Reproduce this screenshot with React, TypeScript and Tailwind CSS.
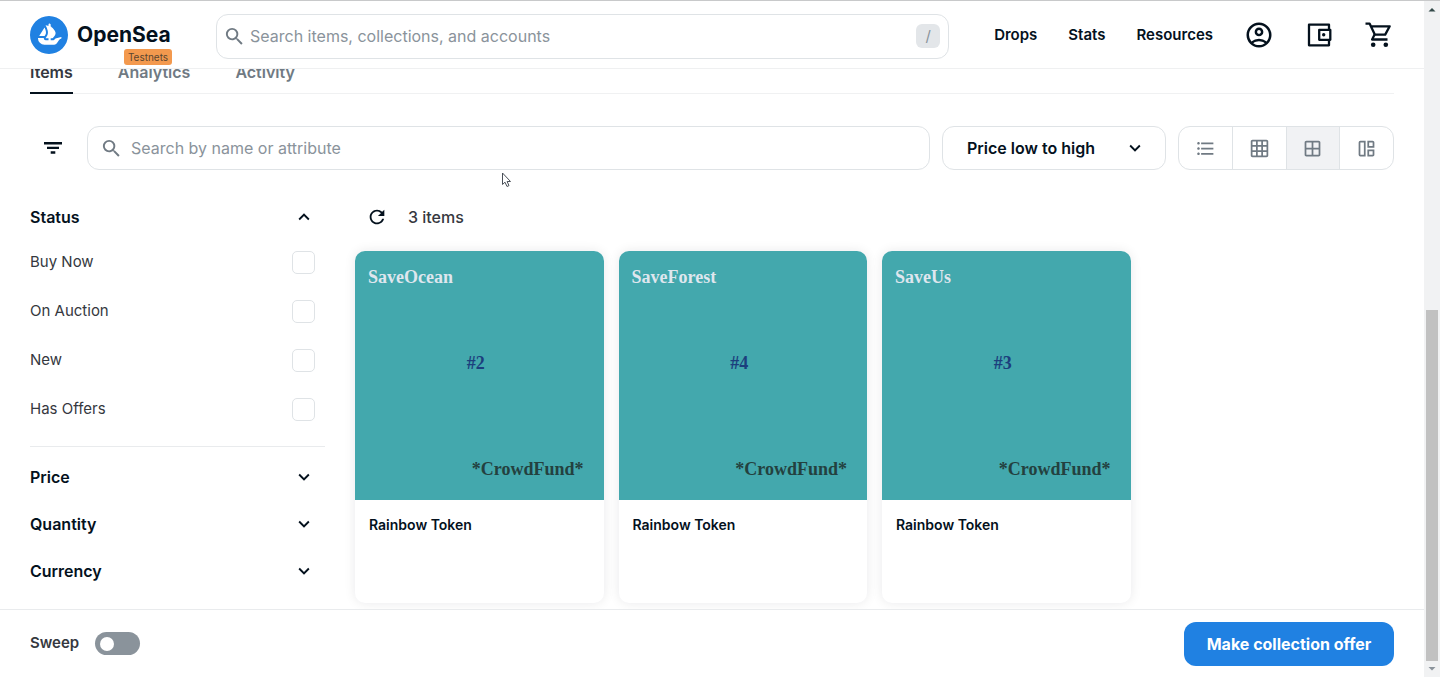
import React from "react";
import {
  MdFormatListBulleted,
  MdGridOn,
  MdKeyboardArrowDown,
  MdKeyboardArrowUp,
  MdOutlineAccountCircle,
  MdOutlineAutoAwesomeMosaic,
  MdOutlineWindow,
  MdRefresh,
  MdSearch,
} from "react-icons/md";
import { SiOpensea } from "react-icons/si";

const statuses = ["Buy Now", "On Auction", "New", "Has Offers"];
const filters = ["Price", "Quantity", "Currency"];
const tokens = [
  { title: "SaveOcean", id: "#2" },
  { title: "SaveForest", id: "#4" },
  { title: "SaveUs", id: "#3" },
];
const views = [
  { label: "List", Icon: MdFormatListBulleted, active: false },
  { label: "Small grid", Icon: MdGridOn, active: false },
  { label: "Large grid", Icon: MdOutlineWindow, active: true },
  { label: "Mosaic", Icon: MdOutlineAutoAwesomeMosaic, active: false },
];

function WalletIcon() {
  return (
    <svg viewBox="0 0 30 30" className="size-[30px]" fill="none" stroke="currentColor" strokeWidth="2.3" strokeLinejoin="round" aria-hidden="true">
      <path d="M25 9.500V4.700H5v20.600h20v-4.800" />
      <path d="M15.200 9.900h11.100v9.900H15.200z" />
      <circle cx="19.700" cy="14.800" r="1.700" fill="currentColor" stroke="none" />
    </svg>
  );
}

function CartIcon() {
  return (
    <svg viewBox="0 0 30 30" className="size-[30px]" fill="none" stroke="currentColor" strokeWidth="2.3" aria-hidden="true">
      <path d="M1.500 3.700h4.200l5.100 10.900h10.400l4.500-8.300H7" strokeLinejoin="round" />
      <path d="M10.600 14.600l-2.500 4.900h15.400" strokeLinejoin="round" />
      <circle cx="9.200" cy="24.700" r="2.300" fill="currentColor" stroke="none" />
      <circle cx="21.800" cy="24.700" r="2.300" fill="currentColor" stroke="none" />
    </svg>
  );
}

function FilterIcon() {
  return (
    <svg viewBox="0 0 24 24" className="size-6" fill="currentColor" aria-hidden="true">
      <path d="M3 6h18v2.500H3zM6 10.800h12v2.300H6zM9.700 15.300h4.600v2.400H9.700z" />
    </svg>
  );
}

function Header() {
  return (
    <header className="relative z-10 flex h-[69px] shrink-0 items-center border-t border-b border-t-[#c8c9ca] border-b-[#eff0f1] bg-white px-[30px]">
      <a href="#home" className="relative flex w-[142px] shrink-0 items-center gap-[9px]">
        <SiOpensea className="size-[38px] shrink-0 text-[#2081e2]" aria-hidden="true" />
        <span className="text-[21px] leading-7 font-bold">OpenSea</span>
        <span className="absolute right-0 -bottom-[11px] flex h-4 w-12 items-center justify-center rounded-[3px] bg-[#f3994e] text-[10px] leading-4 text-[#5a4530]">
          Testnets
        </span>
      </a>
      <label className="mt-[3px] ml-[44px] flex h-[45px] flex-1 items-center gap-1 rounded-xl border border-[#dfe3e6] bg-white pr-2 pl-[6px]">
        <MdSearch className="size-[23px] shrink-0 text-[#707a83]" aria-hidden="true" />
        <input
          type="text"
          aria-label="Search items, collections, and accounts"
          placeholder="Search items, collections, and accounts"
          className="min-w-0 flex-1 text-base outline-none placeholder:text-[#8a939b]"
        />
        <kbd className="flex h-6 w-6 items-center justify-center rounded-md bg-[#e3e6e9] font-['Inter',sans-serif] text-[15px] text-[#8a939b]">
          /
        </kbd>
      </label>
      <nav className="ml-[45px] flex items-center gap-[31px] text-[15px] leading-6 font-semibold">
        <a href="#drops">Drops</a>
        <a href="#stats">Stats</a>
        <a href="#resources">Resources</a>
      </nav>
      <div className="ml-[31px] flex items-center gap-[30px]">
        <button type="button" aria-label="Account">
          <MdOutlineAccountCircle className="size-[30px]" />
        </button>
        <button type="button" aria-label="Wallet">
          <WalletIcon />
        </button>
        <button type="button" aria-label="Cart">
          <CartIcon />
        </button>
      </div>
    </header>
  );
}

function Tabs() {
  return (
    <nav className="-mt-[9px] flex gap-[45px] border-b border-[#f0f1f2] text-base leading-6 font-semibold text-[#707a83]">
      <a href="#items" className="-mb-px border-b-2 border-[#04111d] pb-2 text-[#353840]">
        Items
      </a>
      <a href="#analytics">Analytics</a>
      <a href="#activity">Activity</a>
    </nav>
  );
}

function Toolbar() {
  return (
    <div className="mt-8 flex h-[44px] items-stretch gap-3">
      <button type="button" aria-label="Filters" className="flex w-[45px] items-center justify-center">
        <FilterIcon />
      </button>
      <label className="flex flex-1 items-center gap-2 rounded-xl border border-[#dfe3e6] pr-4 pl-3">
        <MdSearch className="size-[23px] shrink-0 text-[#707a83]" aria-hidden="true" />
        <input
          type="text"
          aria-label="Search by name or attribute"
          placeholder="Search by name or attribute"
          className="min-w-0 flex-1 text-base outline-none placeholder:text-[#8a939b]"
        />
      </label>
      <div className="relative flex w-56">
        <select
          aria-label="Sort by"
          className="w-full appearance-none rounded-xl border border-[#dfe3e6] bg-white pr-12 pl-6 text-base font-semibold"
        >
          <option>Price low to high</option>
          <option>Price high to low</option>
        </select>
        <MdKeyboardArrowDown
          className="pointer-events-none absolute top-[11px] right-5 size-[22px]"
          aria-hidden="true"
        />
      </div>
      <div className="flex w-[216px] overflow-hidden rounded-xl border border-[#dfe3e6]">
        {views.map(({ label, Icon, active }) => (
          <button
            key={label}
            type="button"
            aria-label={label}
            aria-pressed={active}
            className="flex flex-1 items-center justify-center border-l border-[#dfe3e6] text-[#707a83] first:border-l-0 aria-pressed:bg-[#f1f2f4]"
          >
            <Icon className="size-[21px]" />
          </button>
        ))}
      </div>
    </div>
  );
}

function Sidebar() {
  return (
    <aside className="w-[295px] shrink-0">
      <button type="button" className="flex h-[42px] w-full items-center justify-between pr-[10px] text-base font-semibold">
        Status
        <MdKeyboardArrowUp className="size-[22px]" aria-hidden="true" />
      </button>
      <div className="border-b border-[#e9ebed] pb-3">
        {statuses.map((status) => (
          <label key={status} className="flex h-[49px] items-center justify-between pr-[10px] text-[15px] text-[#353840]">
            {status}
            <input
              type="checkbox"
              className="size-[23px] appearance-none rounded-[5px] border border-[#dfe3e6] checked:bg-[#2081e2]"
            />
          </label>
        ))}
      </div>
      <div className="pt-[6px]">
        {filters.map((filter) => (
          <button
            key={filter}
            type="button"
            className="flex h-[47px] w-full items-center justify-between pr-[10px] text-base font-semibold"
          >
            {filter}
            <MdKeyboardArrowDown className="size-[22px]" aria-hidden="true" />
          </button>
        ))}
      </div>
    </aside>
  );
}

function TokenCard({ title, id }: { title: string; id: string }) {
  return (
    <article className="rounded-[10px] bg-white shadow-[0_0_12px_rgba(4,17,29,0.09)]">
      <div className="grid aspect-square grid-rows-3 rounded-t-[10px] bg-[#43a8ad] py-4 pr-5 pl-[13px] font-['Liberation_Serif',serif] text-lg leading-5 font-bold">
        <span className="self-start text-[#dfe6ee]">{title}</span>
        <span className="-mt-6 self-center justify-self-center text-[#1c3f7d]">{id}</span>
        <span className="mb-1 self-end justify-self-end text-[#23413f]">*CrowdFund*</span>
      </div>
      <h3 className="h-[103px] px-[14px] pt-[15px] text-sm leading-5 font-semibold">Rainbow Token</h3>
    </article>
  );
}

function Footer() {
  return (
    <footer className="relative z-10 flex h-[68px] shrink-0 items-center justify-between border-t border-[#e9ebed] bg-white px-[30px]">
      <label className="flex items-center gap-4 text-[15px] font-semibold text-[#353840]">
        Sweep
        <input
          type="checkbox"
          role="switch"
          className="flex h-[23px] w-[45px] appearance-none items-center rounded-full bg-[#8a939b] px-[5px] before:size-[14px] before:rounded-full before:bg-white checked:justify-end checked:bg-[#2081e2]"
        />
      </label>
      <button type="button" className="h-[44px] w-[210px] rounded-xl bg-[#2081e2] text-base font-bold text-white">
        Make collection offer
      </button>
    </footer>
  );
}

function ScrollRail() {
  return (
    <div className="flex w-4 shrink-0 flex-col items-center border-t border-[#c8c9ca] bg-[#f1f2f3]" aria-hidden="true">
      <svg viewBox="0 0 16 16" className="size-4 text-[#344a4a]">
        <path d="M4.500 10.500 8 7l3.500 3.500z" fill="currentColor" />
      </svg>
      <div className="flex-[293]" />
      <div className="w-3 flex-[352] bg-[#c1c1c1]" />
      <svg viewBox="0 0 16 16" className="size-4 text-[#8a939b]">
        <path d="M4.500 6h7L8 9.500z" fill="currentColor" />
      </svg>
    </div>
  );
}

function Pointer() {
  return (
    <svg viewBox="0 0 12 16" className="absolute top-[172px] left-[501px] z-20 h-4 w-3" aria-hidden="true">
      <path
        d="M1.500 1v11.500L4 10.200 6 14.500l2-.9-1.900-4.100h3.400z"
        fill="white"
        stroke="#4a5058"
        strokeWidth="1"
      />
    </svg>
  );
}

export default function App() {
  return (
    <div className="flex h-screen bg-white font-['Inter',sans-serif] text-[#04111d]">
      <div className="flex min-w-0 flex-1 flex-col">
        <Header />
        <main className="flex-1 px-[30px]">
          <Tabs />
          <Toolbar />
          <div className="mt-[26px] flex gap-[30px]">
            <Sidebar />
            <section className="flex-1">
              <div className="flex h-[42px] items-center gap-5 pl-[11px] text-base font-medium text-[#353840]">
                <button type="button" aria-label="Refresh" className="text-[#04111d]">
                  <MdRefresh className="size-[22px]" />
                </button>
                <p>3 items</p>
              </div>
              <div className="mt-[13px] grid grid-cols-4 gap-[15px]">
                {tokens.map((token) => (
                  <TokenCard key={token.id} {...token} />
                ))}
              </div>
            </section>
          </div>
        </main>
        <Footer />
      </div>
      <ScrollRail />
      <Pointer />
    </div>
  );
}
